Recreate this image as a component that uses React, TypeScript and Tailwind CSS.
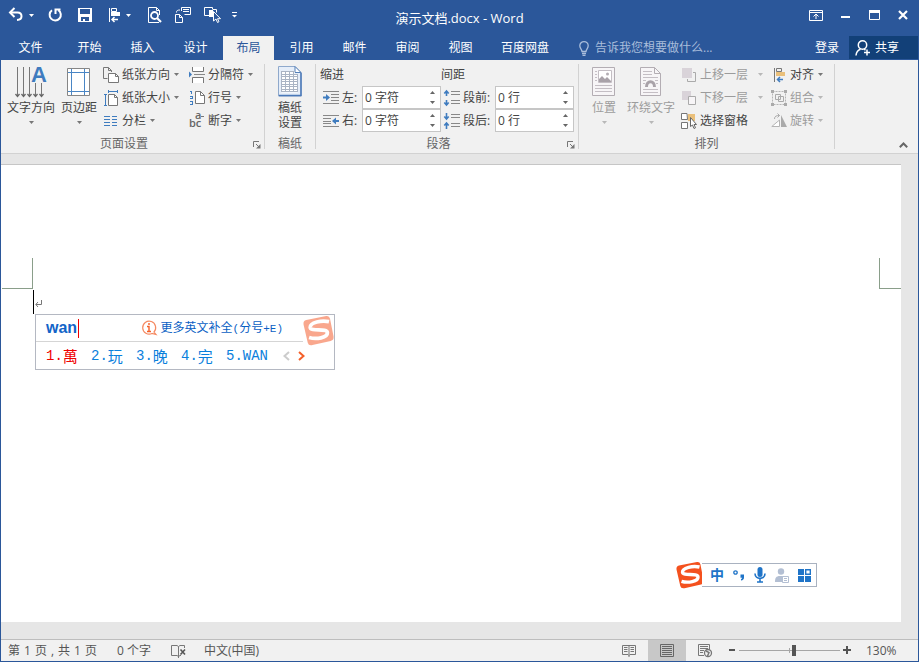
import { clsx } from "clsx";
import { useState } from "react";
import type { ReactNode } from "react";

const TABS = ["开始", "插入", "设计", "布局", "引用", "邮件", "审阅", "视图"];

const CANDIDATES = [
  { index: "1.", word: "萬" },
  { index: "2.", word: "玩" },
  { index: "3.", word: "晚" },
  { index: "4.", word: "完" },
  { index: "5.", latin: "WAN" },
];

/* ---------- shared bits ---------- */

type SvgProps = {
  w: number;
  h: number;
  children: ReactNode;
  className?: string;
};

function Svg({ w, h, children, className }: SvgProps) {
  return (
    <svg
      width={w}
      height={h}
      viewBox={`0 0 ${w} ${h}`}
      fill="none"
      aria-hidden="true"
      className={clsx("shrink-0 overflow-visible", className)}
    >
      {children}
    </svg>
  );
}

function Caret({ className }: { className?: string }) {
  return (
    <Svg w={5} h={3} className={className}>
      <path d="M0 0h5L2.5 3z" fill="currentColor" />
    </Svg>
  );
}

function SogouLogo({ size, className }: { size: number; className?: string }) {
  return (
    <svg
      width={size}
      height={size}
      viewBox="0 0 28 28"
      fill="none"
      aria-hidden="true"
      className={clsx("shrink-0", className)}
    >
      <path
        d="M3 4.500L21 1Q23.800.6 24.400 3.300L27.600 19.500Q28 22.800 25 23.500L8.500 27.200Q5 28 4.300 25L.5 8.500Q0 5.300 3 4.500z"
        fill="#f4511e"
      />
      <path
        d="M23.500 6C17 4.500 6.300 6.500 6.500 11.200C6.800 15.500 21.700 11.500 22 16C22.200 20.500 12 22.300 5.500 20.300"
        stroke="#fff"
        strokeWidth="3.400"
      />
    </svg>
  );
}

/* ---------- title bar ---------- */

function TitleBar() {
  return (
    <div className="grid h-9 grid-cols-[1fr_auto_1fr] items-start text-white">
      <div className="flex h-[30px] items-center pl-[7px]">
        <button type="button" aria-label="撤消">
          <Svg w={16} h={16}>
            <path d="M3 5.500h6.500c2.500 0 4 1.500 4 3.700s-1.600 3.600-4.500 3.800" stroke="#fff" strokeWidth="2" />
            <path d="M6.500 1L2 5.500L6.500 10" stroke="#fff" strokeWidth="2" />
          </Svg>
        </button>
        <button type="button" aria-label="撤消列表" className="ml-[5px]">
          <Caret />
        </button>
        <button type="button" aria-label="重复" className="ml-[13px]">
          <Svg w={16} h={16}>
            <path d="M11.300 3.200A5.600 5.600 0 1 1 5 3.300" stroke="#fff" strokeWidth="2" />
            <path d="M8.500 7V2.500h5" stroke="#fff" strokeWidth="2" />
          </Svg>
        </button>
        <button type="button" aria-label="保存" className="ml-3.5">
          <Svg w={16} h={16}>
            <path d="M1 1h14v14H1z" fill="#fff" />
            <path d="M3 2h10v5H3zM4 10h8v4H8v-2H6v2H4z" fill="#2b579a" />
          </Svg>
        </button>
        <button type="button" aria-label="对齐" className="ml-3.5">
          <Svg w={16} h={16}>
            <path d="M2.500 1v14M4.500 1.500h5v3h-5z" stroke="#fff" />
            <path d="M4 5h9v4H4z" fill="#fff" />
            <path d="M11 12.500H5M7.500 10L5 12.500L7.500 15" stroke="#fff" strokeWidth="1.500" />
          </Svg>
        </button>
        <button type="button" aria-label="对齐列表" className="ml-[3px]">
          <Caret />
        </button>
        <button type="button" aria-label="打印预览和打印" className="ml-[15px]">
          <Svg w={16} h={16}>
            <path d="M13 15.500H2.500v-15h8l3 3V8M10.500.5v3h3" stroke="#fff" />
            <circle cx="8.500" cy="8.500" r="3.500" stroke="#fff" strokeWidth="1.800" />
            <path d="M11 11l4 4" stroke="#fff" strokeWidth="2.200" />
          </Svg>
        </button>
        <button type="button" aria-label="插入链接" className="ml-3">
          <Svg w={18} h={16}>
            <path d="M1.500 7.500h4l3 3v5h-7zM5.500 7.500v3h3" stroke="#fff" />
            <path d="M7.500 4V.5h9v7h-6M9 2.500h6M9 4.500h6M2.500 5.500c0-2 1-2.500 3.500-2.500" stroke="#fff" />
          </Svg>
        </button>
        <button type="button" aria-label="选择对象" className="ml-3">
          <Svg w={18} h={16}>
            <path d="M5 8.500H.5v-8h8V2M8.500 2.500h4v3" stroke="#fff" />
            <path d="M5 3h4v7H5z" fill="#fff" />
            <path d="M9.500 4.500v9.500l2.500-2 1.500 3.500 1.500-.8-1.500-3h3z" fill="#2b579a" stroke="#fff" />
          </Svg>
        </button>
        <button type="button" aria-label="自定义快速访问工具栏" className="ml-[9px]">
          <Svg w={7} h={6}>
            <path d="M1 .5h5" stroke="#fff" />
            <path d="M1 3h5L3.500 5.500z" fill="#fff" />
          </Svg>
        </button>
      </div>

      <h1 className="pt-2 text-[13px] leading-5">演示文档.docx - Word</h1>

      <div className="flex h-[30px] items-center justify-end gap-[18px] pr-2.5">
        <button type="button" aria-label="功能区显示选项">
          <Svg w={14} h={11}>
            <path d="M.5.5h13v10H.5zM1 2.500h12M7 9V4.500M4.500 6.500L7 4l2.500 2.500" stroke="#fff" />
          </Svg>
        </button>
        <button type="button" aria-label="最小化">
          <Svg w={10} h={10}>
            <path d="M0 7h9" stroke="#fff" strokeWidth="2" />
          </Svg>
        </button>
        <button type="button" aria-label="最大化">
          <Svg w={11} h={10}>
            <path d="M.5.5h10v9H.5z" stroke="#fff" />
            <path d="M0 0h11v3H0z" fill="#fff" />
          </Svg>
        </button>
        <button type="button" aria-label="关闭">
          <Svg w={10} h={10}>
            <path d="M1 1l8 8M9 1L1 9" stroke="#fff" strokeWidth="2.200" />
          </Svg>
        </button>
      </div>
    </div>
  );
}

type TabBarProps = { active: string; onSelect: (tab: string) => void };

function TabBar({ active, onSelect }: TabBarProps) {
  return (
    <div className="flex h-6 items-stretch text-white">
      <button type="button" className="w-[59px]">
        文件
      </button>
      <div className="flex pl-[3px]">
        {TABS.map((tab) => (
          <button
            key={tab}
            type="button"
            onClick={() => onSelect(tab)}
            className={clsx(
              "mx-px w-[51px]",
              tab === active && "bg-[#f1f1f1] text-[#2b579a]",
            )}
          >
            {tab}
          </button>
        ))}
        <button type="button" className="px-3.5">
          百度网盘
        </button>
      </div>
      <label className="ml-4 flex flex-1 items-center gap-1.5 text-[#a9bddb]">
        <Svg w={10} h={15}>
          <path d="M3 10.500C3 8.500.8 7.500.8 4.800a4.200 4.200 0 0 1 8.400 0C9.200 7.500 7 8.500 7 10.500zM3 12.500h4M3.500 14.300h3" stroke="currentColor" strokeWidth="1.300" />
        </Svg>
        <input
          type="text"
          aria-label="告诉我您想要做什么"
          placeholder="告诉我您想要做什么..."
          className="w-full bg-transparent outline-none placeholder:text-[#a9bddb]"
        />
      </label>
      <button type="button" className="px-2.5">
        登录
      </button>
      <button
        type="button"
        className="mb-px flex w-[69px] items-center gap-1 bg-[#124078] pl-1.5"
      >
        <Svg w={16} h={16}>
          <circle cx="7.500" cy="5" r="4.200" stroke="#fff" strokeWidth="1.500" />
          <path d="M1 15.500c.3-3.500 2-5.500 4.500-6.300M9 9.200l1.500 1M12 9.500v6M9 12.500h6" stroke="#fff" strokeWidth="1.500" />
        </Svg>
        共享
      </button>
    </div>
  );
}

/* ---------- ribbon ---------- */

type GroupProps = {
  title: string;
  className: string;
  launcher?: boolean;
  children: ReactNode;
};

function Group({ title, className, launcher, children }: GroupProps) {
  return (
    <section className={clsx("flex shrink-0 pt-[3px]", className)}>
      <div className="flex flex-1 flex-col">
        <div className="flex h-[69px]">{children}</div>
        <div className="flex h-[21px] items-center pt-0.5 text-[#666]">
          <span className="flex-1 text-center">{title}</span>
          {launcher && (
            <button
              type="button"
              aria-label={`${title}选项`}
              className="w-[17px] pt-0.5 pl-1.5"
            >
              <Svg w={8} h={8}>
                <path d="M.5 6V.5H6M3 3l3 3" stroke="#777" />
                <path d="M7.500 3v4.500H3z" fill="#777" />
              </Svg>
            </button>
          )}
        </div>
      </div>
      <div className="mt-px mb-1 w-px bg-[#d2d2d2]" />
    </section>
  );
}

type CommandProps = {
  icon: ReactNode;
  label: string;
  disabled?: boolean;
  caret?: boolean;
  wideCaret?: boolean;
};

function BigCommand({ icon, label, disabled }: CommandProps) {
  return (
    <button
      type="button"
      disabled={disabled}
      className="flex flex-col items-center pt-px text-[#444] disabled:text-[#9c9c9c]"
    >
      <span className="flex h-[34px] items-center">{icon}</span>
      <span className="pt-px leading-[18px] whitespace-nowrap">{label}</span>
      <Caret
        className={clsx("mt-1", disabled ? "text-[#b8b8b8]" : "text-[#777]")}
      />
    </button>
  );
}

function Command({ icon, label, disabled, caret = true, wideCaret }: CommandProps) {
  return (
    <button
      type="button"
      disabled={disabled}
      className="flex h-[23px] items-center gap-[3px] whitespace-nowrap text-[#444] disabled:text-[#9c9c9c]"
    >
      {icon}
      {label}
      {caret && (
        <Caret
          className={clsx(
            wideCaret ? "ml-[7px]" : "ml-px",
            disabled ? "text-[#b8b8b8]" : "text-[#777]",
          )}
        />
      )}
    </button>
  );
}

type SpinnerProps = { id: string; icon: ReactNode; label: string; value: string };

function Spinner({ id, icon, label, value }: SpinnerProps) {
  return (
    <div className="flex h-[23px] items-center text-[#444]">
      {icon}
      <label htmlFor={id} className="ml-[3px] flex-1 whitespace-nowrap">
        {label}
      </label>
      <div className="flex h-[23px] w-[79px] border border-[#c6c6c6] bg-white">
        <input
          id={id}
          type="text"
          defaultValue={value}
          className="w-0 flex-1 pl-0.5 outline-none"
        />
        <div className="flex w-[15px] flex-col items-center justify-center gap-[7px]">
          <button type="button" aria-label={`增加${label}`}>
            <Caret className="block rotate-180 text-[#666]" />
          </button>
          <button type="button" aria-label={`减少${label}`}>
            <Caret className="block text-[#666]" />
          </button>
        </div>
      </div>
    </div>
  );
}

function PageSetupGroup() {
  return (
    <Group title="页面设置" launcher className="w-[264px]">
      <div className="flex gap-1.5 pl-1.5">
        <BigCommand
          label="文字方向"
          icon={
            <Svg w={34} h={34}>
              <path d="M3.500 3v30M9.500 3v30M15.500 3v30M21.500 19v14M27.500 19v14" stroke="#777" />
              <path d="M1.500 30l2 2.500 2-2.500M7.500 30l2 2.500 2-2.500M13.500 30l2 2.500 2-2.500M19.500 30l2 2.500 2-2.500M25.500 30l2 2.500 2-2.500" stroke="#666" strokeWidth="1.300" />
              <text x="17" y="18" fill="#3f7cbf" fontFamily="Liberation Sans, sans-serif" fontSize="22" fontWeight="bold">
                A
              </text>
            </Svg>
          }
        />
        <BigCommand
          label="页边距"
          icon={
            <Svg w={24} h={34}>
              <path d="M.5 4.500h22v27H.5z" fill="#fff" stroke="#868686" />
              <path d="M4.500 5v26M17.500 5v26M1 8.500h21M1 27.500h21" stroke="#4a86c5" />
            </Svg>
          }
        />
        <div className="flex w-20 flex-col">
          <Command
            label="纸张方向"
            icon={
              <Svg w={16} h={16}>
                <path d="M4.500 11.500h-4V.5h5l3 3V5M5.500.5v3h3" stroke="#777" />
                <path d="M5.500 6.500h7l3 3v6h-10z" fill="#fff" stroke="#777" />
                <path d="M12.500 6.500v3h3" stroke="#777" />
              </Svg>
            }
          />
          <Command
            label="纸张大小"
            icon={
              <Svg w={16} h={16}>
                <path d="M5.500 4.500h6l3 3v8h-9z" fill="#fff" stroke="#777" />
                <path d="M11.500 4.500v3h3" stroke="#777" />
                <path d="M2.500 4.500v11M1 4.500h3M1 15.500h3M5 1.500h10M5.500 0v3M14.500 0v3" stroke="#3f7cbf" />
              </Svg>
            }
          />
          <Command
            label="分栏"
            icon={
              <Svg w={16} h={16}>
                <path d="M1 3.500h6M1 6.500h6M1 9.500h6M1 12.500h6M9 3.500h5M9 6.500h5M9 9.500h5M9 12.500h5" stroke="#3f7cbf" />
              </Svg>
            }
          />
        </div>
        <div className="flex flex-col">
          <Command
            label="分隔符"
            icon={
              <Svg w={16} h={16}>
                <path d="M3.500 0v4.500h11V0M3.500 16v-5.500h11V16" fill="#fff" stroke="#777" />
                <path d="M5 7.500h11" stroke="#888" />
                <path d="M0 4.500l3 3-3 3z" fill="#3f7cbf" />
              </Svg>
            }
          />
          <Command
            label="行号"
            icon={
              <Svg w={16} h={16}>
                <path d="M6.500 1.500h5l4 4v8h-9z" fill="#fff" stroke="#777" />
                <path d="M11.500 1.500v4h4" stroke="#777" />
                <path d="M1 1.500h2M2.500 1v3M1 6.500h3M1 8.500h3M1 11.500h3M1 14.500h3M3.500 6v2M3.500 11v4" stroke="#3f7cbf" />
              </Svg>
            }
          />
          <Command
            label="断字"
            icon={
              <Svg w={16} h={16}>
                <g fill="#666" fontFamily="Open Sans, sans-serif" fontSize="11" fontWeight="600">
                  <text x="0" y="14">bc</text>
                  <text x="6" y="6">a</text>
                </g>
                <path d="M12 3.500h3" stroke="#777" />
              </Svg>
            }
          />
        </div>
      </div>
    </Group>
  );
}

function ManuscriptGroup() {
  return (
    <Group title="稿纸" className="w-[51px]">
      <button
        type="button"
        className="flex flex-1 flex-col items-center pt-[3px] text-[#444]"
      >
        <Svg w={24} h={31}>
          <path d="M.5.5h16.500l6 6v23.500H.5z" fill="#e6eef9" stroke="#8fa9cc" />
          <path d="M1 29.500h22V7" stroke="#4a78b8" strokeWidth="1.500" />
          <path d="M17 .5v6h6z" fill="#fff" stroke="#5580b8" />
          <path d="M3.500 5.500h13v3h3v18h-16z" fill="#fff" />
          <path d="M3.500 5.500h13M3.500 8.500h16M3.500 10.500h16M3.500 13.500h16M3.500 15.500h16M3.500 18.500h16M3.500 20.500h16M3.500 23.500h16M3.500 25.500h16" stroke="#aab4c4" />
          <path d="M3.500 5v21M7.500 5v21M11.500 5v21M15.500 5v21M19.500 8v18" stroke="#aab4c4" />
        </Svg>
        <span className="w-6 pt-[3px] leading-[15px]">稿纸设置</span>
      </button>
    </Group>
  );
}

function ParagraphGroup() {
  return (
    <Group title="段落" launcher className="w-[263px]">
      <fieldset className="ml-1 flex w-[121px] flex-col">
        <legend className="h-[23px] leading-[23px] text-[#444]">缩进</legend>
        <div className="pl-[3px]">
          <Spinner
            id="indent-left"
            label="左:"
            value="0 字符"
            icon={
              <Svg w={16} h={16}>
                <path d="M0 1.500h16M8 4.500h8M8 7.500h8M8 10.500h8M0 13.500h16" stroke="#888" />
                <path d="M0 7.500h4" stroke="#3f7cbf" strokeWidth="2" />
                <path d="M3 4l4 3.500L3 11z" fill="#3f7cbf" />
              </Svg>
            }
          />
          <Spinner
            id="indent-right"
            label="右:"
            value="0 字符"
            icon={
              <Svg w={16} h={16}>
                <path d="M0 2.500h16M0 5.500h8M0 8.500h8M0 10.500h8M0 13.500h16" stroke="#888" />
                <path d="M16 8h-4" stroke="#3f7cbf" strokeWidth="2" />
                <path d="M13 4.500L9 8l4 3.500z" fill="#3f7cbf" />
              </Svg>
            }
          />
        </div>
      </fieldset>
      <fieldset className="flex w-[133px] flex-col">
        <legend className="h-[23px] leading-[23px] text-[#444]">间距</legend>
        <div className="pl-[3px]">
          <Spinner
            id="space-before"
            label="段前:"
            value="0 行"
            icon={
              <Svg w={16} h={16}>
                <path d="M7 1.500h9M7 4.500h9M7 10.500h9M7 13.500h9" stroke="#888" />
                <path d="M2.500 6V1M.3 3.500L2.500 1l2.200 2.500M2.500 10v5M.3 12.500L2.500 15l2.200-2.500" stroke="#3f7cbf" strokeWidth="1.600" />
              </Svg>
            }
          />
          <Spinner
            id="space-after"
            label="段后:"
            value="0 行"
            icon={
              <Svg w={16} h={16}>
                <path d="M7 1.500h9M7 4.500h9M7 10.500h9M7 13.500h9" stroke="#888" />
                <path d="M2.500 0v5.500M.3 3.500l2.200 2.500 2.200-2.500M2.500 16v-5.500M.3 12.500l2.200-2.500 2.200 2.500" stroke="#3f7cbf" strokeWidth="1.600" />
              </Svg>
            }
          />
        </div>
      </fieldset>
    </Group>
  );
}

function ArrangeGroup() {
  return (
    <Group title="排列" className="w-64">
      <div className="ml-[13px]">
        <BigCommand
          disabled
          label="位置"
          icon={
            <Svg w={24} h={34}>
              <path d="M.5 3.500h22v28H.5z" fill="#f7f5f7" stroke="#b3adb3" />
              <path d="M6.500 6.500h13v12h-13z" fill="#fff" stroke="#c4bec4" />
              <path d="M7 18v-3l3-3 3 3 2-2 4 4v1z" fill="#a9a2a9" />
              <circle cx="15.500" cy="10" r="1.500" fill="#b3adb3" />
              <path d="M3 7.500h2M3 10.500h2M3 13.500h2M3 16.500h2M3 21.500h17M3 24.500h17M3 27.500h17" stroke="#c4bec4" />
            </Svg>
          }
        />
      </div>
      <div className="ml-[11px]">
        <BigCommand
          disabled
          label="环绕文字"
          icon={
            <Svg w={22} h={34}>
              <path d="M.5 3.500h14l6 6v22H.5z" fill="#f7f5f7" stroke="#b3adb3" />
              <path d="M14.500 3.500v6h6" stroke="#b3adb3" />
              <path d="M3 7.500h9M3 10.500h9M3 13.500h15M3 16.500h3M15 16.500h3M3 19.500h2M16 19.500h2M3 25.500h15M3 28.500h15" stroke="#c4bec4" />
              <path d="M6.500 23c0-7 8-7 8 0" stroke="#a9a2a9" strokeWidth="3" />
            </Svg>
          }
        />
      </div>
      <div className="ml-1.5 flex w-[90px] flex-col">
        <Command
          disabled
          wideCaret
          label="上移一层"
          icon={
            <Svg w={16} h={16}>
              <path d="M1 1h10v10H1z" fill="#d9d3d9" />
              <path d="M12 5.500h2.500v9h-8V12" stroke="#aaa" />
            </Svg>
          }
        />
        <Command
          disabled
          wideCaret
          label="下移一层"
          icon={
            <Svg w={16} h={16}>
              <path d="M1 1h9v9H1z" fill="#d9d3d9" />
              <path d="M7.500 6.500h7v8h-7z" fill="#f7f5f7" stroke="#aaa" />
            </Svg>
          }
        />
        <Command
          caret={false}
          label="选择窗格"
          icon={
            <Svg w={16} h={16}>
              <path d="M7 1h7v7H7z" fill="#eac07b" />
              <path d="M6 .5H.5v6h6zM.5 9.500h6v6h-6z" fill="#fff" stroke="#777" />
              <path d="M9.500 4.500v9l2-1.500 1.500 3.500 1.500-.7L13 11.500h2.500z" fill="#fff" stroke="#666" />
            </Svg>
          }
        />
      </div>
      <div className="flex flex-col">
        <Command
          label="对齐"
          icon={
            <Svg w={16} h={16}>
              <path d="M3.500 1v14M5.500 1.500h5v3h-5z" stroke="#777" />
              <path d="M5 5h9v4H5z" fill="#eac07b" />
              <path d="M12 12.500H6.500M9 10l-2.500 2.500L9 15" stroke="#3f7cbf" strokeWidth="1.500" />
            </Svg>
          }
        />
        <Command
          disabled
          label="组合"
          icon={
            <Svg w={16} h={16}>
              <path d="M1.500 1.500h13v13h-13z" stroke="#b5b5b5" strokeDasharray="2 1" />
              <path d="M4.500 4.500h5v5h-5zM7.500 6.500h5v5h-5z" stroke="#aaa" />
              <path d="M0 0h3v3H0zM13 0h3v3h-3zM0 13h3v3H0zM13 13h3v3h-3z" fill="#aaa" />
            </Svg>
          }
        />
        <Command
          disabled
          label="旋转"
          icon={
            <Svg w={16} h={16}>
              <path d="M.8 13.500L8.500 7v6.500z" fill="#fff" stroke="#b5b5b5" />
              <path d="M10 2v12h6z" fill="#aaa" />
              <path d="M3.500 6c0-3 2-3.500 5-3.500M6.500.5l2 2-2 2" stroke="#aaa" />
            </Svg>
          }
        />
      </div>
    </Group>
  );
}

function Ribbon() {
  return (
    <div className="flex border-b border-[#d2d2d2] bg-[#f1f1f1]">
      <PageSetupGroup />
      <ManuscriptGroup />
      <ParagraphGroup />
      <ArrangeGroup />
      <div className="flex flex-1 items-end justify-end pr-2.5 pb-[5px]">
        <button type="button" aria-label="折叠功能区">
          <Svg w={9} h={6} className="block">
            <path d="M.8 5.200l3.700-3.700 3.700 3.700" stroke="#666" strokeWidth="2" />
          </Svg>
        </button>
      </div>
    </div>
  );
}

/* ---------- input method ---------- */

function CandidateWindow() {
  const [selected, setSelected] = useState(0);

  return (
    <div className="absolute top-6 left-[34px] w-[300px] border border-[#b4b8c2] bg-white">
      <div className="mr-[31px] flex h-[27px] items-center border-b border-[#d5d5d5] pl-2.5">
        <span className="w-8 font-['Liberation_Sans',sans-serif] text-base leading-[18px] font-bold text-[#1264c8]">
          wan
        </span>
        <span className="h-[19px] w-px bg-[#f00000]" />
        <button
          type="button"
          className="ml-auto flex items-center gap-1 pr-5 whitespace-nowrap text-[#0a5fc4]"
        >
          <Svg w={16} h={16}>
            <path d="M13 12a6.500 6.500 0 1 0-2 1.500l4 1z" stroke="#f58a62" strokeWidth="1.200" />
            <path d="M6 6.500h2v4.500M6 11.500h4M8 3v2" stroke="#f4602a" strokeWidth="1.400" />
          </Svg>
          <span>
            更多英文补全
            <span className="font-['Liberation_Mono',monospace] text-[11px]">(</span>
            分号
            <span className="font-['Liberation_Mono',monospace] text-[11px]">+E)</span>
          </span>
        </button>
      </div>
      <div className="flex h-[27px] items-center pl-2.5">
        {CANDIDATES.map((item, i) => (
          <button
            key={item.index}
            type="button"
            onClick={() => setSelected(i)}
            className={clsx(
              "flex w-[45px] items-center",
              i === selected ? "text-[#f00000]" : "text-[#0a80dc]",
            )}
          >
            <span className="font-['Liberation_Mono',monospace] text-sm leading-5">
              {item.index}
              {item.latin}
            </span>
            <span className="text-[15px] leading-[18px]">{item.word}</span>
          </button>
        ))}
        <button type="button" aria-label="上一页" className="ml-3">
          <Svg w={7} h={10}>
            <path d="M6 1L1.500 5L6 9" stroke="#ccc" strokeWidth="2" />
          </Svg>
        </button>
        <button type="button" aria-label="下一页" className="ml-2">
          <Svg w={7} h={10}>
            <path d="M1 1l4.500 4L1 9" stroke="#f4602a" strokeWidth="2" />
          </Svg>
        </button>
      </div>
      <SogouLogo size={31} className="absolute top-0 right-0 opacity-50" />
    </div>
  );
}

function ImeToolbar() {
  return (
    <div className="absolute right-[101px] bottom-[50px] flex items-center">
      <SogouLogo size={28} />
      <div className="-ml-0.5 flex h-6 w-[115px] items-center justify-between border border-l-0 border-[#a9b2c0] bg-white pr-[5px] pl-2 text-[#1f74c8]">
        <button type="button" className="w-3.5 text-sm leading-5 font-bold">
          中
        </button>
        <button type="button" aria-label="中文标点">
          <Svg w={12} h={12}>
            <circle cx="2.500" cy="3.500" r="1.700" stroke="currentColor" strokeWidth="1.300" />
            <path d="M7.500 5.500H11v3c0 1.700-1 2.700-3 3V10c.8-.2 1.200-.6 1.200-1.200H7.500z" fill="currentColor" />
          </Svg>
        </button>
        <button type="button" aria-label="语音">
          <Svg w={12} h={16}>
            <rect x="3.500" y="0" width="5" height="10" rx="2.500" fill="currentColor" />
            <path d="M1 6.500c0 6.500 10 6.500 10 0M6 11v4M3 15h6" stroke="currentColor" strokeWidth="1.600" />
          </Svg>
        </button>
        <button type="button" aria-label="账户" className="text-[#b3bfd3]">
          <Svg w={14} h={15}>
            <circle cx="6" cy="3.500" r="3.200" fill="currentColor" />
            <path d="M0 14c0-4 1-6 5-6h3v6z" fill="currentColor" />
            <path d="M7.500 8.500h6v6h-6z" fill="#fff" stroke="currentColor" />
            <path d="M9 10.500h3M9 12.500h3" stroke="currentColor" />
          </Svg>
        </button>
        <button type="button" aria-label="工具箱">
          <Svg w={13} h={13}>
            <path d="M0 0h6v6H0zM0 7h6v6H0zM7 7h6v6H7z" fill="currentColor" />
            <path d="M7.700.7h4.600v4.600H7.700z" stroke="currentColor" strokeWidth="1.400" />
          </Svg>
        </button>
      </div>
    </div>
  );
}

/* ---------- document ---------- */

function Workspace() {
  return (
    <main className="relative flex flex-1 flex-col bg-[#e6e6e6] pt-2.5 pr-[17px] pb-[17px]">
      <div className="flex-1 border-t border-[#c6c6c6] bg-white pt-[93px]">
        <div className="flex justify-between pl-px">
          <div className="size-[31px] border-r border-b border-[#8a9e8a]" />
          <div className="h-[31px] w-[22px] border-b border-l border-[#8a9e8a]" />
        </div>
        <div className="relative mt-px ml-8 flex h-6 items-center border-l border-black">
          <Svg w={8} h={8} className="mt-1 ml-px">
            <path d="M6.500 0v4.500H1M3 2L.8 4.500L3 7" stroke="#777" />
          </Svg>
        </div>
        <div className="relative -mt-6">
          <CandidateWindow />
        </div>
      </div>
      <ImeToolbar />
    </main>
  );
}

/* ---------- status bar ---------- */

function StatusBar() {
  const [zoom, setZoom] = useState(130);

  return (
    <footer className="flex h-[22px] items-stretch border-t border-[#bdbdbd] bg-[#f1f1f1] text-[#555]">
      <div className="flex items-center gap-5 pl-[7px]">
        <span className="flex gap-1">
          <span>第</span>
          <span>1</span>
          <span>页</span>
          <span>,</span>
          <span>共</span>
          <span>1</span>
          <span>页</span>
        </span>
        <span>0 个字</span>
        <button type="button" aria-label="校对">
          <Svg w={15} h={14}>
            <path d="M7.500 2.500L6 1.500H.5v10H6l1.500 1L9 11.500h1M7.500 2.500L9 1.500h4.500V4M7.500 2.500V14" stroke="#777" />
            <path d="M9.500 5.500l4.500 5M14 5.500l-4.500 5" stroke="#555" strokeWidth="1.600" />
          </Svg>
        </button>
        <span className="-ml-0.5">中文(中国)</span>
      </div>
      <div className="ml-auto flex items-stretch">
        <button type="button" aria-label="阅读视图" className="px-3">
          <Svg w={14} h={13}>
            <path d="M7 1.500H.5v9H6l1 1 1-1h5.500v-9zM7 1v12" stroke="#777" />
            <path d="M2 3.500h3.500M2 5.500h3.500M2 7.500h3.500M8.500 3.500H12M8.500 5.500H12M8.500 7.500H12" stroke="#777" />
          </Svg>
        </button>
        <button
          type="button"
          aria-label="页面视图"
          className="flex w-[38px] items-center justify-center bg-[#c8c8c8]"
        >
          <Svg w={14} h={13}>
            <path d="M.5.5h13v12H.5zM2 2.500h10M2 4.500h10M2 6.500h10M2 8.500h10M2 10.500h10" stroke="#666" />
          </Svg>
        </button>
        <button type="button" aria-label="Web 版式视图" className="px-3">
          <Svg w={14} h={13}>
            <path d="M6 11.500H.5V.5h11V5M2 2.500h8M2 4.500h8M2 6.500h4M2 8.500h3" stroke="#777" />
            <circle cx="10" cy="9" r="3.500" stroke="#777" strokeWidth="1.300" />
            <path d="M8 7l3 1.500L9.500 12" stroke="#777" strokeWidth="1.500" />
          </Svg>
        </button>
        <button
          type="button"
          aria-label="缩小"
          className="pl-[5px]"
          onClick={() => setZoom(Math.max(10, zoom - 10))}
        >
          <Svg w={7} h={9}>
            <path d="M0 4h6" stroke="#555" strokeWidth="2" />
          </Svg>
        </button>
        <div className="ml-[3px] grid w-[101px] items-center">
          <div className="col-start-1 row-start-1 h-px bg-[#a6a6a6]" />
          <div className="col-start-1 row-start-1 h-[5px] w-px justify-self-center bg-[#a6a6a6]" />
          <input
            type="range"
            aria-label="显示比例"
            min={0}
            max={240}
            value={zoom}
            onChange={(e) => setZoom(Number(e.target.value))}
            className="col-start-1 row-start-1 h-[11px] w-full appearance-none bg-transparent [&::-webkit-slider-thumb]:h-[11px] [&::-webkit-slider-thumb]:w-1 [&::-webkit-slider-thumb]:appearance-none [&::-webkit-slider-thumb]:bg-[#555]"
          />
        </div>
        <button
          type="button"
          aria-label="放大"
          className="pl-[3px]"
          onClick={() => setZoom(Math.min(240, zoom + 10))}
        >
          <Svg w={8} h={9}>
            <path d="M0 4h8M4 0v8" stroke="#555" strokeWidth="2" />
          </Svg>
        </button>
        <button type="button" className="w-[67px] pl-[15px] text-left">
          {zoom}%
        </button>
      </div>
    </footer>
  );
}

export default function App() {
  const [activeTab, setActiveTab] = useState("布局");

  return (
    <div className="flex min-h-screen flex-col border-x border-b border-[#2b579a] bg-[#2b579a] font-['Open_Sans','Noto_Sans_CJK_SC',sans-serif] text-xs">
      <header>
        <TitleBar />
        <TabBar active={activeTab} onSelect={setActiveTab} />
      </header>
      <Ribbon />
      <Workspace />
      <StatusBar />
    </div>
  );
}
